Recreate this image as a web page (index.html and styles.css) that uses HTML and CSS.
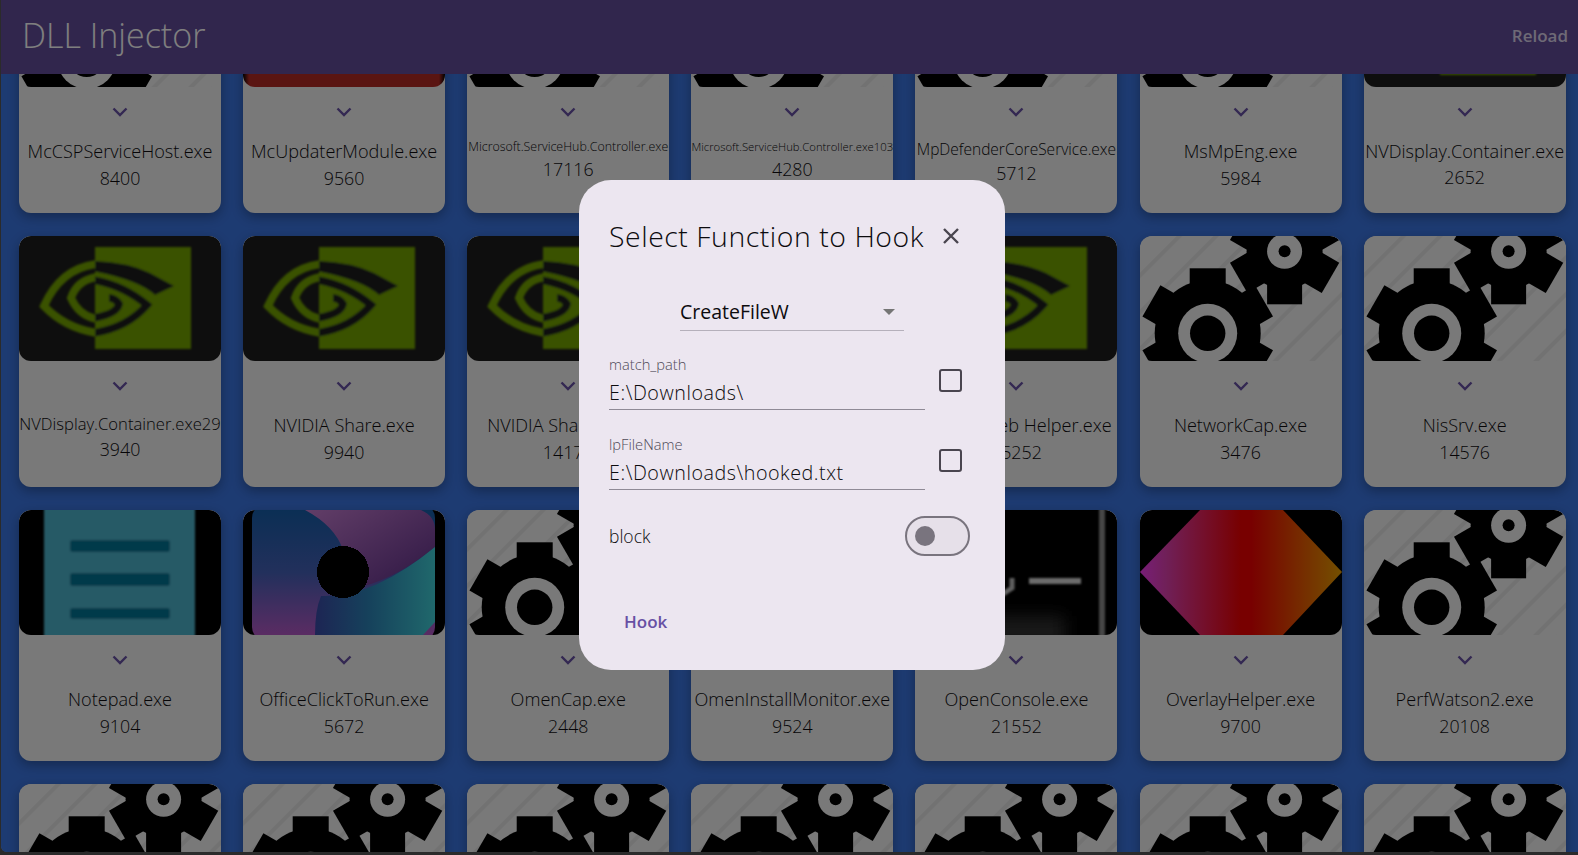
FILE: index.html
```html
<!DOCTYPE html>
<html lang="en">
<head>
  <meta charset="UTF-8">
  <title>DLL Injector</title>
  <link rel="stylesheet" href="styles.css">
</head>
<body>
  <svg class="defs" aria-hidden="true">
    <defs>
      <pattern id="stripes" width="26" height="26" patternUnits="userSpaceOnUse" patternTransform="rotate(45)">
        <rect width="4" height="26" fill="#e5e5e5"/>
      </pattern>
      <g id="tooth-big">
        <circle r="53"/>
        <rect x="-18" y="-65" width="36" height="130"/>
        <rect x="-18" y="-65" width="36" height="130" transform="rotate(60)"/>
        <rect x="-18" y="-65" width="36" height="130" transform="rotate(120)"/>
      </g>
      <g id="tooth-small">
        <circle r="38"/>
        <rect x="-17.5" y="-53" width="35" height="106"/>
        <rect x="-17.5" y="-53" width="35" height="106" transform="rotate(60)"/>
        <rect x="-17.5" y="-53" width="35" height="106" transform="rotate(120)"/>
      </g>
      <symbol id="gears" viewBox="0 0 202 125">
        <rect width="202" height="125" fill="#f2f2f2"/>
        <rect width="202" height="125" fill="url(#stripes)"/>
        <use href="#tooth-small" x="144.6" y="15.3"/>
        <circle cx="144.6" cy="15.3" r="17.5" fill="#f2f2f2"/>
        <circle cx="144.6" cy="15.3" r="6"/>
        <use href="#tooth-big" x="67.7" y="97.3"/>
        <circle cx="67.7" cy="97.3" r="29.5" fill="#f2f2f2"/>
        <circle cx="67.7" cy="97.3" r="17.7"/>
      </symbol>
      <clipPath id="left-half"><rect width="76" height="125"/></clipPath>
      <clipPath id="right-half"><rect x="76" width="96" height="125"/></clipPath>
      <filter id="soft" x="-10%" y="-10%" width="120%" height="120%"><feGaussianBlur stdDeviation="1"/></filter>
      <filter id="fog" x="-30%" y="-60%" width="160%" height="220%"><feGaussianBlur stdDeviation="8"/></filter>
      <symbol id="nvidia" viewBox="0 0 202 125">
        <rect width="202" height="125" fill="#1c1c1c"/>
        <g filter="url(#soft)">
          <rect x="76" y="11" width="96" height="102" fill="#74a400"/>
          <g fill="none" stroke="#74a400" clip-path="url(#left-half)">
            <path stroke-width="8" d="M78 28 Q42 32 25 70 Q46 92 78 97"/>
            <path stroke-width="8" d="M78 41 Q58 44 52 62 Q60 80 78 83"/>
          </g>
          <g clip-path="url(#right-half)">
            <path fill="#1c1c1c" d="M74 25 Q108 26 131 37 L155 50 L136 59 Q120 44 74 35Z"/>
            <path fill="none" stroke="#1c1c1c" stroke-width="7.5" d="M74 44 Q104 49 128 69 Q108 92 74 97"/>
            <path fill="none" stroke="#1c1c1c" stroke-width="7.5" d="M74 82 Q98 78 100 68 Q96 62 90 62"/>
          </g>
        </g>
      </symbol>
      <symbol id="notepad" viewBox="0 0 202 125">
        <rect width="202" height="125" fill="#000"/>
        <g filter="url(#soft)">
          <rect x="25" y="-6" width="151" height="137" fill="#4db4cc"/>
          <rect x="51" y="30" width="100" height="12" rx="3" fill="#027494"/>
          <rect x="51" y="63" width="100" height="13" rx="3" fill="#027494"/>
          <rect x="51" y="98" width="100" height="11" rx="3" fill="#027494"/>
        </g>
      </symbol>
      <linearGradient id="office-left" x1="0" y1="0" x2="0" y2="1">
        <stop offset="0" stop-color="#125ea8"/>
        <stop offset="0.5" stop-color="#4560b8"/>
        <stop offset="1" stop-color="#c058c8"/>
      </linearGradient>
      <linearGradient id="office-top" x1="0" y1="0" x2="1" y2="1">
        <stop offset="0" stop-color="#c47cd0"/>
        <stop offset="0.7" stop-color="#7a449c"/>
        <stop offset="1" stop-color="#52307a"/>
      </linearGradient>
      <linearGradient id="office-low" x1="0" y1="0" x2="1" y2="0">
        <stop offset="0" stop-color="#3a4aa8"/>
        <stop offset="0.45" stop-color="#2c84b8"/>
        <stop offset="1" stop-color="#40d0d8"/>
      </linearGradient>
      <symbol id="office" viewBox="0 0 202 125">
        <rect width="202" height="125" fill="#000"/>
        <rect x="9" y="-6" width="183" height="137" rx="14" fill="url(#office-left)"/>
        <path d="M62 0 L178 0 Q192 6 192 20 L192 37 Q150 72 105 80 L100 40 Q92 16 62 0Z" fill="url(#office-top)"/>
        <path d="M72 125 Q72 100 78 86 Q130 88 192 37 L192 112 L180 125Z" fill="url(#office-low)"/>
        <circle cx="100" cy="62" r="26" shape-rendering="crispEdges"/>
      </symbol>
      <symbol id="console" viewBox="0 0 202 125">
        <rect width="202" height="125" fill="#000"/>
        <rect x="20" y="106" width="130" height="30" fill="#303030" filter="url(#fog)"/>
        <g filter="url(#soft)">
          <rect x="184" y="-6" width="6" height="137" fill="#8c8c8c"/>
          <rect x="114" y="68" width="52" height="6" fill="#d8d8d8"/>
          <path d="M97 68 V78 L82 88" fill="none" stroke="#c0c0c0" stroke-width="5"/>
        </g>
      </symbol>
      <linearGradient id="overlay-fill" x1="0" y1="0" x2="1" y2="0">
        <stop offset="0" stop-color="#f03cf0"/>
        <stop offset="0.13" stop-color="#e040b0"/>
        <stop offset="0.5" stop-color="#f00000"/>
        <stop offset="0.55" stop-color="#f00000"/>
        <stop offset="1" stop-color="#e8a000"/>
      </linearGradient>
      <symbol id="overlay" viewBox="0 0 202 125">
        <rect width="202" height="125" fill="#000"/>
        <polygon points="0,62 60,0 143,0 202,62 143,125 60,125" fill="url(#overlay-fill)"/>
      </symbol>
      <linearGradient id="red-bar" x1="0" y1="0" x2="1" y2="0">
        <stop offset="0" stop-color="#000"/>
        <stop offset="0.03" stop-color="#b42a24"/>
        <stop offset="0.97" stop-color="#b42a24"/>
        <stop offset="1" stop-color="#000"/>
      </linearGradient>
      <symbol id="red" viewBox="0 0 202 125">
        <rect width="202" height="125" fill="url(#red-bar)"/>
      </symbol>
      <symbol id="chevron" viewBox="0 0 16 10">
        <path d="M1.5 1.5 L8 8 L14.5 1.5" fill="none" stroke="#6750a4" stroke-width="2.4"/>
      </symbol>
    </defs>
  </svg>

  <div class="app">
    <header class="topbar">
      <h1 class="topbar-title">DLL Injector</h1>
      <span class="reload">Reload</span>
    </header>

    <main class="content">
      <div class="process-grid">
        <div class="card"><svg class="thumb"><use href="#gears"/></svg><svg class="chevron"><use href="#chevron"/></svg><div class="name">McCSPServiceHost.exe</div><div class="pid">8400</div></div>
        <div class="card"><svg class="thumb"><use href="#red"/></svg><svg class="chevron"><use href="#chevron"/></svg><div class="name">McUpdaterModule.exe</div><div class="pid">9560</div></div>
        <div class="card"><svg class="thumb"><use href="#gears"/></svg><svg class="chevron"><use href="#chevron"/></svg><div class="name fit-xs">Microsoft.ServiceHub.Controller.exe</div><div class="pid">17116</div></div>
        <div class="card"><svg class="thumb"><use href="#gears"/></svg><svg class="chevron"><use href="#chevron"/></svg><div class="name fit-xxs">Microsoft.ServiceHub.Controller.exe103</div><div class="pid">4280</div></div>
        <div class="card"><svg class="thumb"><use href="#gears"/></svg><svg class="chevron"><use href="#chevron"/></svg><div class="name fit-s">MpDefenderCoreService.exe</div><div class="pid">5712</div></div>
        <div class="card"><svg class="thumb"><use href="#gears"/></svg><svg class="chevron"><use href="#chevron"/></svg><div class="name">MsMpEng.exe</div><div class="pid">5984</div></div>
        <div class="card"><svg class="thumb"><use href="#nvidia"/></svg><svg class="chevron"><use href="#chevron"/></svg><div class="name fit-l">NVDisplay.Container.exe</div><div class="pid">2652</div></div>

        <div class="card"><svg class="thumb"><use href="#nvidia"/></svg><svg class="chevron"><use href="#chevron"/></svg><div class="name fit-m">NVDisplay.Container.exe29</div><div class="pid">3940</div></div>
        <div class="card"><svg class="thumb"><use href="#nvidia"/></svg><svg class="chevron"><use href="#chevron"/></svg><div class="name">NVIDIA Share.exe</div><div class="pid">9940</div></div>
        <div class="card"><svg class="thumb"><use href="#nvidia"/></svg><svg class="chevron"><use href="#chevron"/></svg><div class="name">NVIDIA Share.exe14</div><div class="pid">14172</div></div>
        <div class="card"><svg class="thumb"><use href="#nvidia"/></svg></div>
        <div class="card"><svg class="thumb"><use href="#nvidia"/></svg><svg class="chevron"><use href="#chevron"/></svg><div class="name">NVIDIA Web Helper.exe</div><div class="pid">15252</div></div>
        <div class="card"><svg class="thumb"><use href="#gears"/></svg><svg class="chevron"><use href="#chevron"/></svg><div class="name">NetworkCap.exe</div><div class="pid">3476</div></div>
        <div class="card"><svg class="thumb"><use href="#gears"/></svg><svg class="chevron"><use href="#chevron"/></svg><div class="name">NisSrv.exe</div><div class="pid">14576</div></div>

        <div class="card"><svg class="thumb"><use href="#notepad"/></svg><svg class="chevron"><use href="#chevron"/></svg><div class="name">Notepad.exe</div><div class="pid">9104</div></div>
        <div class="card"><svg class="thumb"><use href="#office"/></svg><svg class="chevron"><use href="#chevron"/></svg><div class="name">OfficeClickToRun.exe</div><div class="pid">5672</div></div>
        <div class="card"><svg class="thumb"><use href="#gears"/></svg><svg class="chevron"><use href="#chevron"/></svg><div class="name">OmenCap.exe</div><div class="pid">2448</div></div>
        <div class="card"><svg class="thumb"><use href="#gears"/></svg><svg class="chevron"><use href="#chevron"/></svg><div class="name">OmenInstallMonitor.exe</div><div class="pid">9524</div></div>
        <div class="card"><svg class="thumb"><use href="#console"/></svg><svg class="chevron"><use href="#chevron"/></svg><div class="name">OpenConsole.exe</div><div class="pid">21552</div></div>
        <div class="card"><svg class="thumb"><use href="#overlay"/></svg><svg class="chevron"><use href="#chevron"/></svg><div class="name">OverlayHelper.exe</div><div class="pid">9700</div></div>
        <div class="card"><svg class="thumb"><use href="#gears"/></svg><svg class="chevron"><use href="#chevron"/></svg><div class="name">PerfWatson2.exe</div><div class="pid">20108</div></div>

        <div class="card"><svg class="thumb"><use href="#gears"/></svg></div>
        <div class="card"><svg class="thumb"><use href="#gears"/></svg></div>
        <div class="card"><svg class="thumb"><use href="#gears"/></svg></div>
        <div class="card"><svg class="thumb"><use href="#gears"/></svg></div>
        <div class="card"><svg class="thumb"><use href="#gears"/></svg></div>
        <div class="card"><svg class="thumb"><use href="#gears"/></svg></div>
        <div class="card"><svg class="thumb"><use href="#gears"/></svg></div>
      </div>
    </main>

    <div class="scrim">
      <div class="dialog">
        <div class="dialog-head">
          <h2 class="dialog-title">Select Function to Hook</h2>
          <svg class="close" viewBox="0 0 18 18"><path d="M2 2 L16 16 M16 2 L2 16" fill="none" stroke="#49454f" stroke-width="2.4"/></svg>
        </div>

        <div class="dropdown">
          <span class="dropdown-value">CreateFileW</span>
          <span class="dropdown-arrow"></span>
        </div>

        <div class="field-row first">
          <div class="field">
            <div class="field-label">match_path</div>
            <div class="field-value">E:\Downloads\</div>
          </div>
          <span class="checkbox"></span>
        </div>

        <div class="field-row">
          <div class="field">
            <div class="field-label">lpFileName</div>
            <div class="field-value">E:\Downloads\hooked.txt</div>
          </div>
          <span class="checkbox"></span>
        </div>

        <div class="switch-row">
          <span class="switch-label">block</span>
          <span class="switch"><span class="switch-thumb"></span></span>
        </div>

        <div class="hook">Hook</div>
      </div>
    </div>
  </div>
</body>
</html>
```

FILE: styles.css
```css
* {
  box-sizing: border-box;
}

html, body {
  height: 100%;
}

body {
  margin: 0;
  overflow: hidden;
  background-color: #2b2b2b;
  font-family: "Open Sans", "Noto Sans", sans-serif;
  color: #0c0b0e;
}

.defs {
  display: block;
  width: 0;
  height: 0;
}

.app {
  position: relative;
  display: flex;
  flex-direction: column;
  height: 852px;
  margin-left: 1px;
  overflow: hidden;
  border-bottom-left-radius: 6px;
  background-color: #3b76e4;
}

.topbar {
  display: flex;
  flex: 0 0 74px;
  align-items: center;
  justify-content: space-between;
  padding: 0 10px 4px 21px;
  background-color: #624c9a;
  color: #fff;
}

.topbar-title {
  margin: 0;
  font-size: 34px;
  font-weight: 300;
}

.reload {
  color: #dcd4ec;
  font-size: 17px;
  font-weight: 600;
}

.content {
  flex: 1;
  overflow: hidden;
  padding: 0 12.36px 0 18.04px;
}

/* the list is scrolled: first row starts above the bar */
.process-grid {
  display: grid;
  grid-template-columns: repeat(7, 1fr);
  gap: 23px 22.1px;
  margin-top: -112px;
}

.card {
  display: flex;
  flex-direction: column;
  align-items: center;
  height: 251px;
  overflow: hidden;
  border-radius: 12px;
  background-color: #f2f2f2;
  box-shadow: 0 4px 12px rgba(0, 0, 0, 0.3);
}

.thumb {
  display: block;
  flex: 0 0 125px;
  width: 100%;
  height: 125px;
  border-radius: 12px;
}

.chevron {
  display: block;
  flex: 0 0 10px;
  width: 16px;
  height: 10px;
  margin: 20px 0 21px;
}

.name {
  width: 100%;
  font-size: 18.1px;
  font-weight: 350;
  line-height: 27px;
  text-align: center;
  white-space: nowrap;
}

.fit-l {
  font-size: 18.1px;
  line-height: 26px;
}

.fit-m {
  font-size: 16.6px;
  line-height: 24px;
}

.fit-s {
  font-size: 15.5px;
  line-height: 22px;
}

.fit-xs {
  font-size: 12.4px;
  line-height: 18px;
}

.fit-xxs {
  font-size: 11.3px;
  line-height: 18px;
}

.pid {
  font-size: 17.8px;
  font-weight: 350;
  line-height: 27px;
  text-align: center;
}

.scrim {
  position: absolute;
  top: 0;
  right: 0;
  bottom: 0;
  left: 0;
  display: flex;
  align-items: center;
  justify-content: center;
  padding: 0 0 2px 5px;
  background-color: rgba(0, 0, 0, 0.5);
}

.dialog {
  display: flex;
  flex-direction: column;
  width: 426px;
  height: 490px;
  padding: 38px 35px 36px 30px;
  border-radius: 32px;
  background-color: #ece6f0;
}

.dialog-head {
  display: flex;
  align-items: center;
  height: 40px;
}

.dialog-title {
  flex: 0 0 316px;
  margin: 0 0 4px;
  font-size: 28.4px;
  font-weight: 350;
  letter-spacing: 0.55px;
  white-space: nowrap;
}

.close {
  width: 18px;
  height: 18px;
  margin: 0 0 4px 17px;
}

.dropdown {
  display: flex;
  align-items: center;
  justify-content: space-between;
  width: 224px;
  height: 36px;
  margin: 37px 0 0 71px;
  padding: 0 9px 2px 0;
  border-bottom: 1px solid #b5b0bb;
}

.dropdown-value {
  font-size: 19.5px;
  font-weight: 500;
}

.dropdown-arrow {
  width: 0;
  height: 0;
  border-top: 6px solid #757575;
  border-right: 6px solid transparent;
  border-left: 6px solid transparent;
}

.field-row {
  display: flex;
  align-items: center;
  margin-top: 26px;
}

.field-row.first {
  margin-top: 25px;
}

.field {
  flex: 0 0 316px;
  height: 54px;
  border-bottom: 1.5px solid #8f8a96;
}

.field-label {
  margin-top: -1px;
  padding-bottom: 1px;
  color: #4f4a58;
  font-size: 14.7px;
  font-weight: 350;
  line-height: 18px;
}

.field-value {
  margin-top: 6px;
  font-size: 19.7px;
  font-weight: 350;
  line-height: 26px;
  letter-spacing: 0.55px;
}

.checkbox {
  width: 23px;
  height: 23px;
  margin: 0 0 5px 14px;
  border: 2.5px solid #49454f;
  border-radius: 3px;
}

.switch-row {
  display: flex;
  align-items: center;
  justify-content: space-between;
  height: 40px;
  margin-top: 26px;
}

.switch-label {
  margin-bottom: 1px;
  font-size: 17.5px;
  font-weight: 350;
}

.switch {
  display: flex;
  align-items: center;
  width: 65px;
  height: 40px;
  padding-left: 8px;
  border: 2.5px solid #79747e;
  border-radius: 20px;
  background-color: #e6e0e9;
}

.switch-thumb {
  width: 20px;
  height: 20px;
  border-radius: 50%;
  background-color: #79747e;
}

.hook {
  margin: 54px 0 0 15px;
  color: #6750a4;
  font-size: 17px;
  font-weight: 600;
  line-height: 24px;
}
```
